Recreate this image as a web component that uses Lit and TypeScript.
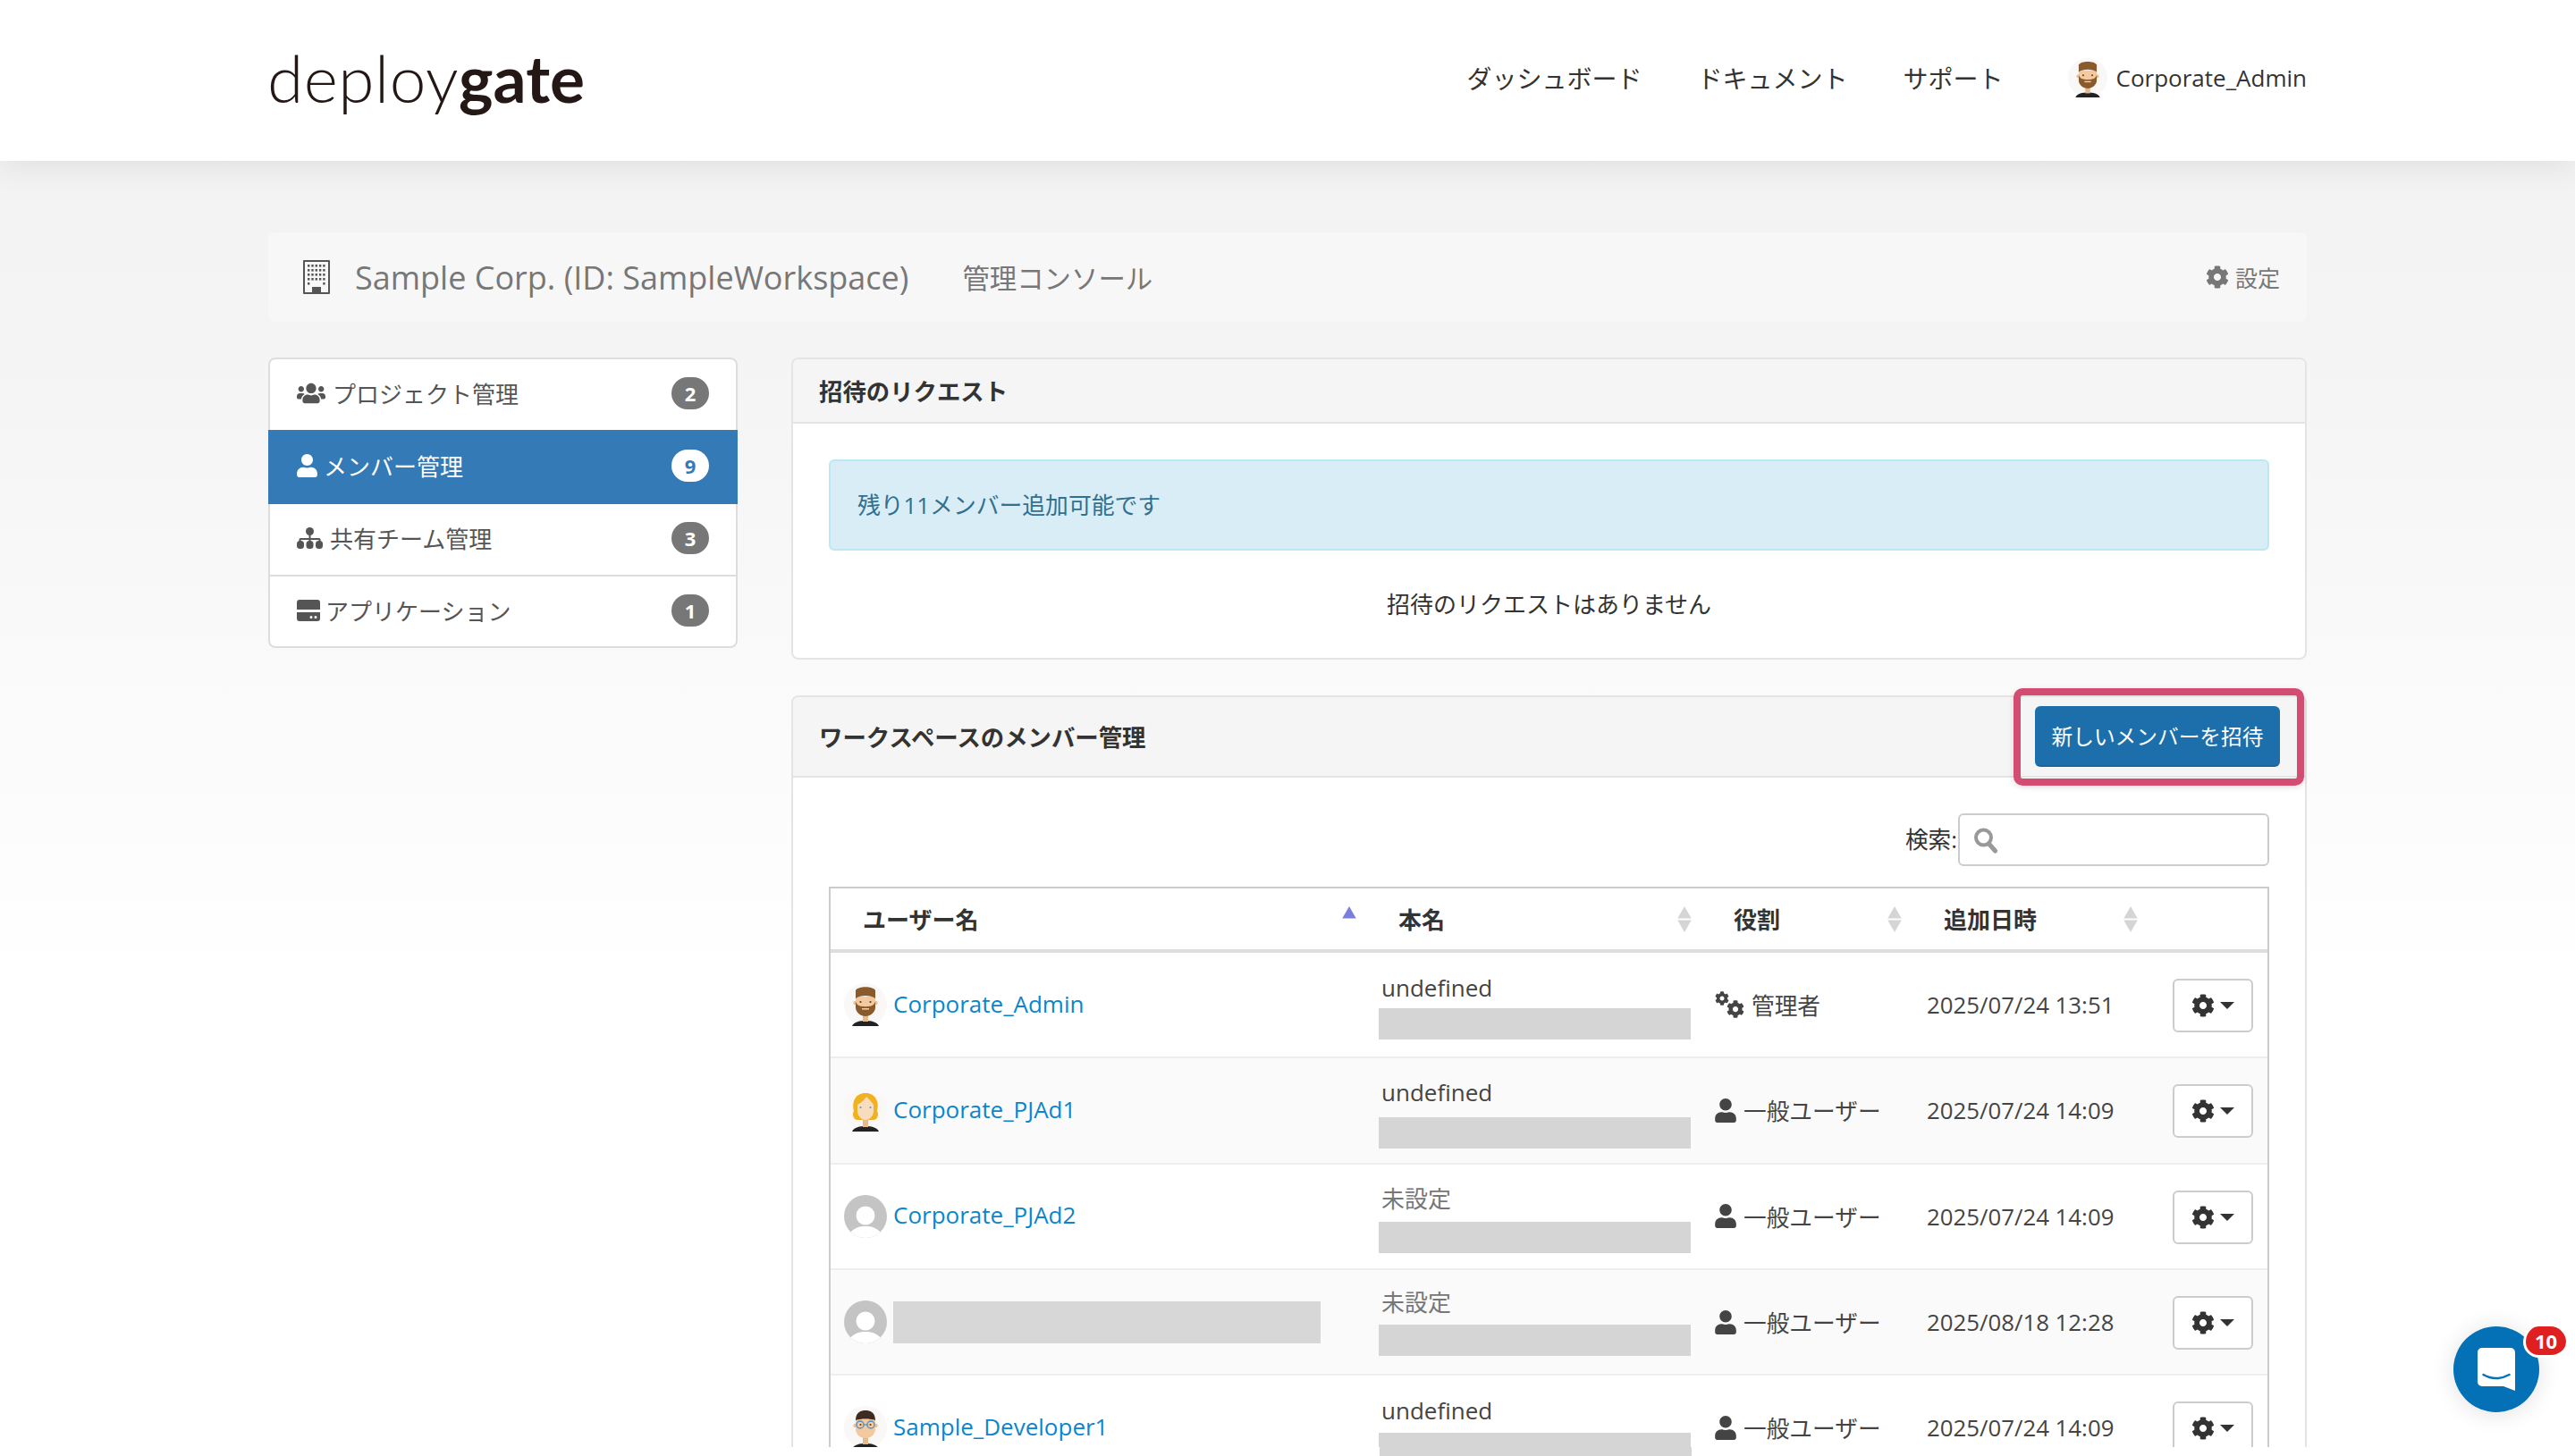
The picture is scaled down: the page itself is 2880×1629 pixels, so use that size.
import { LitElement, html, css, svg } from 'lit';
import { customElement } from 'lit/decorators.js';

const COG = 'M487.4 315.700l-42.600-24.600c4.300-23.200 4.300-47 0-70.200l42.600-24.600c4.900-2.800 7.100-8.600 5.500-14-11.100-35.600-30-67.800-54.700-94.600-3.800-4.100-10-5.100-14.800-2.300L380.800 110c-17.900-15.400-38.500-27.300-60.800-35.100V25.800c0-5.600-3.900-10.500-9.400-11.700-36.700-8.200-74.300-7.800-109.200 0-5.500 1.200-9.400 6.100-9.400 11.700V75c-22.200 7.900-42.800 19.800-60.800 35.100L88.700 85.500c-4.900-2.800-11-1.900-14.800 2.300-24.700 26.700-43.600 58.900-54.700 94.600-1.700 5.400.6 11.200 5.500 14L67.300 221c-4.300 23.200-4.300 47 0 70.200l-42.600 24.600c-4.900 2.800-7.100 8.600-5.500 14 11.100 35.600 30 67.800 54.700 94.600 3.800 4.100 10 5.100 14.800 2.300l42.600-24.600c17.900 15.400 38.500 27.300 60.800 35.100v49.200c0 5.600 3.900 10.500 9.400 11.700 36.700 8.200 74.300 7.800 109.200 0 5.500-1.200 9.400-6.100 9.400-11.700v-49.200c22.200-7.900 42.800-19.800 60.800-35.100l42.600 24.600c4.900 2.800 11 1.900 14.800-2.300 24.700-26.700 43.600-58.900 54.700-94.600 1.500-5.500-.7-11.300-5.600-14.100zM256 336c-44.100 0-80-35.900-80-80s35.900-80 80-80 80 35.900 80 80-35.900 80-80 80z';
const USER = 'M224 256c70.700 0 128-57.300 128-128S294.700 0 224 0 96 57.300 96 128s57.300 128 128 128zm89.600 32h-16.700c-22.200 10.200-46.900 16-72.900 16s-50.600-5.800-72.900-16h-16.700C60.200 288 0 348.200 0 422.400V464c0 26.500 21.500 48 48 48h352c26.500 0 48-21.500 48-48v-41.600c0-74.200-60.200-134.400-134.400-134.400z';
const USERS = 'M96 224c35.300 0 64-28.700 64-64s-28.700-64-64-64-64 28.700-64 64 28.700 64 64 64zm448 0c35.300 0 64-28.700 64-64s-28.700-64-64-64-64 28.700-64 64 28.700 64 64 64zm32 32h-64c-17.600 0-33.500 7.100-45.100 18.600 40.300 22.100 68.900 62 75.100 109.400h66c17.700 0 32-14.300 32-32v-32c0-35.300-28.700-64-64-64zm-256 0c61.900 0 112-50.100 112-112S381.900 32 320 32 208 82.100 208 144s50.100 112 112 112zm76.800 32h-8.300c-20.800 10-43.900 16-68.500 16s-47.600-6-68.500-16h-8.300C179.600 288 128 339.600 128 403.200V432c0 26.500 21.500 48 48 48h288c26.500 0 48-21.500 48-48v-28.800c0-63.600-51.600-115.200-115.200-115.200zm-223.700-13.400C161.500 263.100 145.600 256 128 256H64c-35.300 0-64 28.700-64 64v32c0 17.700 14.300 32 32 32h65.900c6.300-47.400 34.900-87.300 75.200-109.400z';

const icon = (d: string, w: number, h: number, vw: number, vh: number) => html`<svg class="ic" width=${w} height=${h} viewBox="0 0 ${vw} ${vh}"><path fill="currentColor" fill-rule="evenodd" d=${d}></path></svg>`;

const sitemapIcon = html`<svg class="ic" width="29" height="24" viewBox="0 0 29 24" fill="currentColor">
  <circle cx="14.500" cy="4.500" r="4.500"></circle>
  <path d="M13.500 8h2v4h9.500a1.500 1.500 0 0 1 1.500 1.500V17h-2v-3h-9v3h-2v-3h-9v3h-2v-3.500A1.500 1.500 0 0 1 4 12h9.500z"></path>
  <rect x="0" y="15" width="8" height="9" rx="3.500"></rect>
  <rect x="10.500" y="15" width="8" height="9" rx="3.500"></rect>
  <rect x="21" y="15" width="8" height="9" rx="3.500"></rect>
</svg>`;

const serverIcon = html`<svg class="ic" width="26" height="24" viewBox="0 0 26 24" fill="currentColor">
  <path d="M3 0h20a3 3 0 0 1 3 3v8H0V3a3 3 0 0 1 3-3z"></path>
  <path fill-rule="evenodd" d="M0 14h26v7a3 3 0 0 1-3 3H3a3 3 0 0 1-3-3zm16 4a1.500 1.500 0 1 0 0 3 1.500 1.500 0 0 0 0-3zm5 0a1.500 1.500 0 1 0 0 3 1.500 1.500 0 0 0 0-3z"></path>
</svg>`;

const buildingIcon = () => {
  const dots = [];
  for (let r = 0; r < 5; r++) {
    for (let c = 0; c < 5; c++) {
      if (r === 4 && c > 0 && c < 4) continue;
      dots.push(svg`<rect x=${5 + c * 4.300} y=${5 + r * 5} width="2.400" height="2.600" fill="#555"></rect>`);
    }
  }
  return html`<svg width="30" height="38" viewBox="0 0 30 38">
    <rect x="0" y="0" width="30" height="38" rx="1" fill="#555"></rect>
    <rect x="2" y="2" width="26" height="34" fill="#f7f7f7"></rect>
    ${dots}
    <path d="M10 36v-6h10v6z" fill="#555"></path>
  </svg>`;
};

type Face = 'beard' | 'blonde' | 'glasses' | 'none';

const avatar = (face: Face, size = 48) => {
  if (face === 'none') {
    return html`<svg class="av" width=${size} height=${size} viewBox="0 0 48 48">
      <defs><clipPath id="avclip"><circle cx="24" cy="24" r="24"></circle></clipPath></defs>
      <circle cx="24" cy="24" r="24" fill="#c4c4c4"></circle>
      <g clip-path="url(#avclip)">
        <circle cx="24" cy="23" r="10.500" fill="#fff"></circle>
        <path d="M4 46 C10 36 18 35 24 35 C30 35 38 36 44 46 L44 48 L4 48z" fill="#fff"></path>
      </g>
    </svg>`;
  }
  const hair = face === 'beard' ? '#8a5a2b' : face === 'blonde' ? '#f0b21e' : '#3d2a20';
  return html`<svg class="av" width=${size} height=${size} viewBox="0 0 48 48">
    <circle cx="24" cy="24" r="24" fill="#faf8f6"></circle>
    ${face === 'blonde'
      ? svg`<path d="M11 25 C8 12 15 5 24 5 C34 5 40 13 37 25 C40 30 36 36 32 35 L16 35 C12 36 8 30 11 25z" fill=${hair}></path>`
      : ''}
    <path d="M9 48 C11 43 18 42 24 42 C30 42 37 43 39 48z" fill="#222"></path>
    <rect x="21" y="34" width="6" height="9" fill="#e6b98e"></rect>
    ${face !== 'blonde'
      ? svg`<circle cx="12.500" cy="22" r="2.200" fill="#eabf94"></circle>
            <circle cx="35.500" cy="22" r="2.200" fill="#eabf94"></circle>`
      : ''}
    ${face === 'blonde'
      ? svg`<path d="M15 12 C18 8 30 8 33 12 V25 C33 31 28 35 24 35 C20 35 15 31 15 25z" fill="#f8dcc0"></path>
            <path d="M15 18 C19 16 23 12 25 9 C28 12 31 15 33 18 L34 9 L14 8z" fill=${hair}></path>`
      : svg`<path d="M13 15 h22 v11 c0 6-5 10-11 10 s-11-4-11-10z" fill="#f3ca9f"></path>`}
    ${face === 'beard'
      ? svg`<path d="M13 8 C16 3 32 3 35 8 L35 17 C30 13 18 13 13 17z" fill=${hair}></path>
            <path d="M13 21 L15 24 C18 27 30 27 33 24 L35 21 V27 C35 33 29 37 24 37 C19 37 13 33 13 27z" fill=${hair}></path>
            <rect x="20" y="28" width="8" height="1.600" fill="#f3ca9f"></rect>`
      : ''}
    ${face === 'glasses'
      ? svg`<path d="M13 16 C13 7 19 5 24 5 C29 5 35 7 35 16 C30 14 18 14 13 16z" fill=${hair}></path>
            <circle cx="18" cy="21" r="4" fill="none" stroke="#4f8fc4" stroke-width="1.400"></circle>
            <circle cx="30" cy="21" r="4" fill="none" stroke="#4f8fc4" stroke-width="1.400"></circle>
            <rect x="22" y="20.400" width="4" height="1.200" fill="#4f8fc4"></rect>`
      : ''}
    <circle cx="18.500" cy="21" r="1.100" fill=${face === 'blonde' ? '#4f9fd0' : '#5c3b20'}></circle>
    <circle cx="29.500" cy="21" r="1.100" fill=${face === 'blonde' ? '#4f9fd0' : '#5c3b20'}></circle>
  </svg>`;
};

interface Member {
  face: Face;
  name?: string;
  real: string;
  admin?: boolean;
  date: string;
  top: number;
  gap: number;
}

const members: Member[] = [
  { face: 'beard', name: 'Corporate_Admin', real: 'undefined', admin: true, date: '2025/07/24 13:51', top: 22, gap: 6 },
  { face: 'blonde', name: 'Corporate_PJAd1', real: 'undefined', date: '2025/07/24 14:09', top: 21, gap: 11 },
  { face: 'none', name: 'Corporate_PJAd2', real: '未設定', date: '2025/07/24 14:09', top: 21, gap: 9 },
  { face: 'none', real: '未設定', date: '2025/08/18 12:28', top: 19, gap: 8 },
  { face: 'glasses', name: 'Sample_Developer1', real: 'undefined', date: '2025/07/24 14:09', top: 22, gap: 8 },
];

const sideItems = [
  { icon: icon(USERS, 32, 26, 640, 512), label: 'プロジェクト管理', count: 2, gap: 8 },
  { icon: icon(USER, 23, 26, 448, 512), label: 'メンバー管理', count: 9, active: true, gap: 7 },
  { icon: sitemapIcon, label: '共有チーム管理', count: 3, gap: 8 },
  { icon: serverIcon, label: 'アプリケーション', count: 1, gap: 6, divided: true },
];

@customElement('app-root')
export class AppRoot extends LitElement {
  static styles = css`
    :host {
      display: block;
      height: 1629px;
      overflow: hidden;
      background: linear-gradient(#f2f2f2 0, #f3f3f3 300px, #ffffff 1100px);
      font-family: "Open Sans", "Noto Sans CJK JP", sans-serif;
      font-size: 26px;
      color: #333;
      position: relative;
    }
    * { box-sizing: border-box; }

    header {
      height: 180px;
      background: #fff;
      padding: 0 300px 0 299px;
      display: flex;
      align-items: center;
      justify-content: space-between;
      box-shadow: 0 4px 36px rgba(0, 0, 0, 0.09);
      position: relative;
    }
    .logo {
      font-family: Lato, sans-serif;
      font-size: 73px;
      line-height: 1;
      font-weight: 300;
      color: #231815;
      letter-spacing: 0.5px;
      margin-top: -6px;
    }
    .logo b { font-weight: 700; letter-spacing: 0; }
    nav {
      display: flex;
      align-items: center;
      font-size: 28px;
      margin-top: -6px;
    }
    nav a { margin-left: 62px; }
    nav a:first-child { margin-left: 0; }
    .me {
      display: flex;
      align-items: center;
      gap: 10px;
      margin-left: 72px;
      font-size: 26px;
    }

    main { padding: 80px 300px 0; }

    .title {
      height: 100px;
      background: #f7f7f7;
      border-radius: 8px;
      display: flex;
      align-items: center;
      padding: 0 30px 0 39px;
      color: #777;
    }
    .title h1 {
      margin: 0 0 0 28px;
      font-size: 36px;
      font-weight: 400;
    }
    .title .sub { margin-left: 60px; font-size: 30.400px; }
    .title .cfg {
      margin-left: auto;
      display: flex;
      align-items: center;
      gap: 7px;
      font-size: 25px;
      padding-bottom: 1px;
    }

    .cols {
      display: grid;
      grid-template-columns: 525px 1695px;
      gap: 60px;
      margin-top: 40px;
      align-items: start;
    }

    .side {
      background: #fff;
      border: 2px solid #ddd;
      border-radius: 8px;
    }
    .item {
      height: 79px;
      display: flex;
      align-items: center;
      padding: 0 30px 3px;
      color: #555;
    }
    .item.active {
      background: #337ab7;
      color: #fff;
      height: 83px;
      margin: 0 -2px;
      padding: 0 32px 3px;
    }
    .item.divided { border-top: 2px solid #ddd; height: 80px; }
    .item .lbl { flex: 1; }
    .badge {
      width: 42px;
      height: 36px;
      border-radius: 18px;
      background: #777;
      color: #fff;
      font-size: 22px;
      font-weight: 700;
      display: flex;
      align-items: center;
      justify-content: center;
    }
    .item.active .badge { background: #fff; color: #337ab7; }
    .ic { flex: none; display: block; }

    .panel {
      background: #fff;
      border: 2px solid #e4e4e4;
      border-radius: 8px;
      margin-bottom: 40px;
    }
    .phead {
      background: #f5f5f5;
      border-bottom: 2px solid #e4e4e4;
      border-radius: 6px 6px 0 0;
      height: 72px;
      padding: 0 29px 2px;
      display: flex;
      align-items: center;
      font-weight: 700;
      font-size: 26.400px;
      color: #333;
    }
    .phead.big { height: 90px; position: relative; }
    .pbody { padding: 40px 40px 0; }
    .pbody.list { padding-top: 40px; }
    .alert {
      height: 102px;
      background: #d9edf7;
      border: 2px solid #bce8f1;
      border-radius: 6px;
      color: #31708f;
      display: flex;
      align-items: center;
      padding: 0 30px 2px;
      font-size: 25.800px;
    }
    .none { text-align: center; padding: 42px 0; line-height: 36px; }

    .invite-wrap {
      position: absolute;
      right: 1px;
      top: -10px;
      width: 325px;
      height: 109px;
      border: 8px solid #d34d73;
      border-radius: 10px;
      display: flex;
      align-items: center;
      justify-content: center;
      box-shadow: 0 2px 6px rgba(0, 0, 0, 0.12);
      padding: 0 3px 2px 0;
    }
    .invite {
      width: 274px;
      height: 68px;
      background: #1d6fab;
      border-bottom: 2px solid #1a659c;
      border-radius: 6px;
      color: #fff;
      font-weight: 400;
      font-size: 23.700px;
      display: flex;
      align-items: center;
      justify-content: center;
    }

    .search {
      display: flex;
      justify-content: flex-end;
      align-items: center;
      gap: 1px;
      height: 59px;
      font-size: 25.700px;
    }
    .search > span { margin-top: -4px; }
    .box {
      width: 348px;
      height: 59px;
      border: 2px solid #ccc;
      border-radius: 6px;
      padding-left: 15px;
      display: flex;
      align-items: center;
      background: #fff;
    }

    .table {
      margin-top: 23px;
      border: 2px solid #ccc;
      border-bottom: none;
    }
    .row {
      display: grid;
      grid-template-columns: 599px 375px 235px 277px 1fr;
      height: 118.300px;
      border-bottom: 2px solid #eee;
      align-items: center;
    }
    .row.odd { background: #fafafa; }
    .row.th {
      height: 72px;
      border-bottom: 4px solid #ddd;
      font-weight: 700;
    }
    .th > div {
      padding-left: 36px;
      position: relative;
      height: 100%;
      display: flex;
      align-items: center;
    }
    .sort {
      position: absolute;
      right: 11px;
      top: 20px;
      width: 16px;
      height: 29px;
      display: block;
    }
    .th > div:nth-child(4) .sort { right: 24px; }
    .user {
      display: flex;
      align-items: center;
      gap: 7px;
      padding-left: 15px;
      color: #0a86cc;
    }
    .user > span:not(.masked) { margin-top: -3px; }
    .masked {
      display: block;
      height: 47px;
      width: 478px;
      background: #d7d7d7;
    }
    .real { padding-left: 14px; color: #444; align-self: start; }
    .real span { display: block; padding-left: 3px; line-height: 34px; }
    .real.muted span { color: #777; }
    .real i { display: block; height: 35px; background: #d5d5d5; width: 349px; }
    .role {
      padding-left: 15px;
      display: flex;
      align-items: center;
      gap: 8px;
      color: #444;
      font-size: 25.700px;
    }
    .date { padding-left: 17px; color: #444; font-size: 25.800px; }
    .act {
      width: 90px;
      height: 60px;
      margin-left: 15px;
      margin-top: 2px;
      border: 2px solid #ccc;
      border-radius: 6px;
      background: #fff;
      display: flex;
      align-items: center;
      justify-content: center;
      gap: 6px;
      color: #333;
    }
    .caret {
      width: 0;
      height: 0;
      border-left: 8px solid transparent;
      border-right: 8px solid transparent;
      border-top: 8.500px solid #333;
    }

    /* the strip cut off at the bottom of the capture */
    .strip {
      position: absolute;
      left: 0;
      right: 0;
      top: 1619px;
      height: 10px;
      background: #fff;
    }
    .strip i {
      position: absolute;
      left: 1543px;
      width: 349px;
      top: 0;
      bottom: 0;
      background: #d5d5d5;
    }

    .chat {
      position: absolute;
      left: 2744px;
      top: 1484px;
      width: 96px;
      height: 96px;
      border-radius: 50%;
      background: #0470b5;
      box-shadow: 0 2px 26px rgba(0, 0, 0, 0.12);
      display: flex;
      align-items: center;
      justify-content: center;
    }
    .chat .num {
      position: absolute;
      left: 78px;
      top: 0;
      width: 48px;
      height: 35px;
      border: 3px solid #fff;
      border-right: none;
      border-top: none;
      border-radius: 18px;
      background: #e02020;
      color: #fff;
      font-size: 22px;
      font-weight: 700;
      display: flex;
      align-items: center;
      justify-content: center;
    }
  `;

  sortIcon(up = '#d5d5d5', down = '#d5d5d5') {
    return html`<svg class="sort" viewBox="0 0 16 30">
      <path d="M8 0l8 14H0z" fill=${up}></path>
      <path d="M0 16h16L8 30z" fill=${down}></path>
    </svg>`;
  }

  renderRow(m: Member, i: number) {
    return html`<div class="row ${i % 2 ? 'odd' : ''}">
      <div class="user">
        ${avatar(m.face)}
        ${m.name ? html`<span>${m.name}</span>` : html`<span class="masked"></span>`}
      </div>
      <div class="real ${m.real === '未設定' ? 'muted' : ''}" style="padding-top:${m.top}px">
        <span style="margin-bottom:${m.gap}px">${m.real}</span>
        <i></i>
      </div>
      <div class="role">
        ${m.admin
          ? html`<svg class="ic" width="33" height="30" viewBox="0 0 33 30" fill="currentColor">
              <svg x="0" y="0" width="16" height="16" viewBox="0 0 512 512"><path fill-rule="evenodd" d=${COG}></path></svg>
              <svg x="13" y="10" width="20" height="20" viewBox="0 0 512 512"><path fill-rule="evenodd" d=${COG}></path></svg>
            </svg>`
          : icon(USER, 24, 27, 448, 512)}
        <span>${m.admin ? '管理者' : '一般ユーザー'}</span>
      </div>
      <div class="date">${m.date}</div>
      <div class="act">${icon(COG, 26, 26, 512, 512)}<span class="caret"></span></div>
    </div>`;
  }

  render() {
    return html`
      <header>
        <div class="logo">deploy<b>gate</b></div>
        <nav>
          <a>ダッシュボード</a>
          <a>ドキュメント</a>
          <a>サポート</a>
          <span class="me">${avatar('beard', 44)}Corporate_Admin</span>
        </nav>
      </header>
      <main>
        <div class="title">
          ${buildingIcon()}
          <h1>Sample Corp. (ID: SampleWorkspace)</h1>
          <span class="sub">管理コンソール</span>
          <span class="cfg">${icon(COG, 26, 26, 512, 512)}設定</span>
        </div>
        <div class="cols">
          <div class="side">
            ${sideItems.map((s) => html`<div class="item ${s.active ? 'active' : ''} ${s.divided ? 'divided' : ''}">
              ${s.icon}
              <span class="lbl" style="margin-left:${s.gap}px">${s.label}</span>
              <span class="badge">${s.count}</span>
            </div>`)}
          </div>
          <div>
            <section class="panel">
              <div class="phead">招待のリクエスト</div>
              <div class="pbody">
                <div class="alert">残り11メンバー追加可能です</div>
                <div class="none">招待のリクエストはありません</div>
              </div>
            </section>
            <section class="panel">
              <div class="phead big">
                ワークスペースのメンバー管理
                <div class="invite-wrap"><div class="invite">新しいメンバーを招待</div></div>
              </div>
              <div class="pbody list">
                <div class="search">
                  <span>検索:</span>
                  <div class="box">
                    <svg width="28" height="30" viewBox="0 0 28 30" fill="none" stroke="#999">
                      <circle cx="11.500" cy="12" r="8.500" stroke-width="4"></circle>
                      <path d="M17.500 19l7 8" stroke-width="5" stroke-linecap="round"></path>
                    </svg>
                  </div>
                </div>
                <div class="table">
                  <div class="row th">
                    <div>ユーザー名${this.sortIcon('#7b7fdc', 'transparent')}</div>
                    <div>本名${this.sortIcon()}</div>
                    <div>役割${this.sortIcon()}</div>
                    <div>追加日時${this.sortIcon()}</div>
                    <div></div>
                  </div>
                  ${members.map((m, i) => this.renderRow(m, i))}
                </div>
              </div>
            </section>
          </div>
        </div>
      </main>
      <div class="strip"><i></i></div>
      <div class="chat">
        <svg width="42" height="48" viewBox="0 0 42 48">
          <path d="M5 0h32a5 5 0 0 1 5 5v43l-13-5H5a5 5 0 0 1-5-5V5a5 5 0 0 1 5-5z" fill="#fff"></path>
          <path d="M6.500 30q14 8 29 0" fill="none" stroke="#0470b5" stroke-width="2.500" stroke-linecap="round"></path>
        </svg>
        <span class="num">10</span>
      </div>
    `;
  }
}
